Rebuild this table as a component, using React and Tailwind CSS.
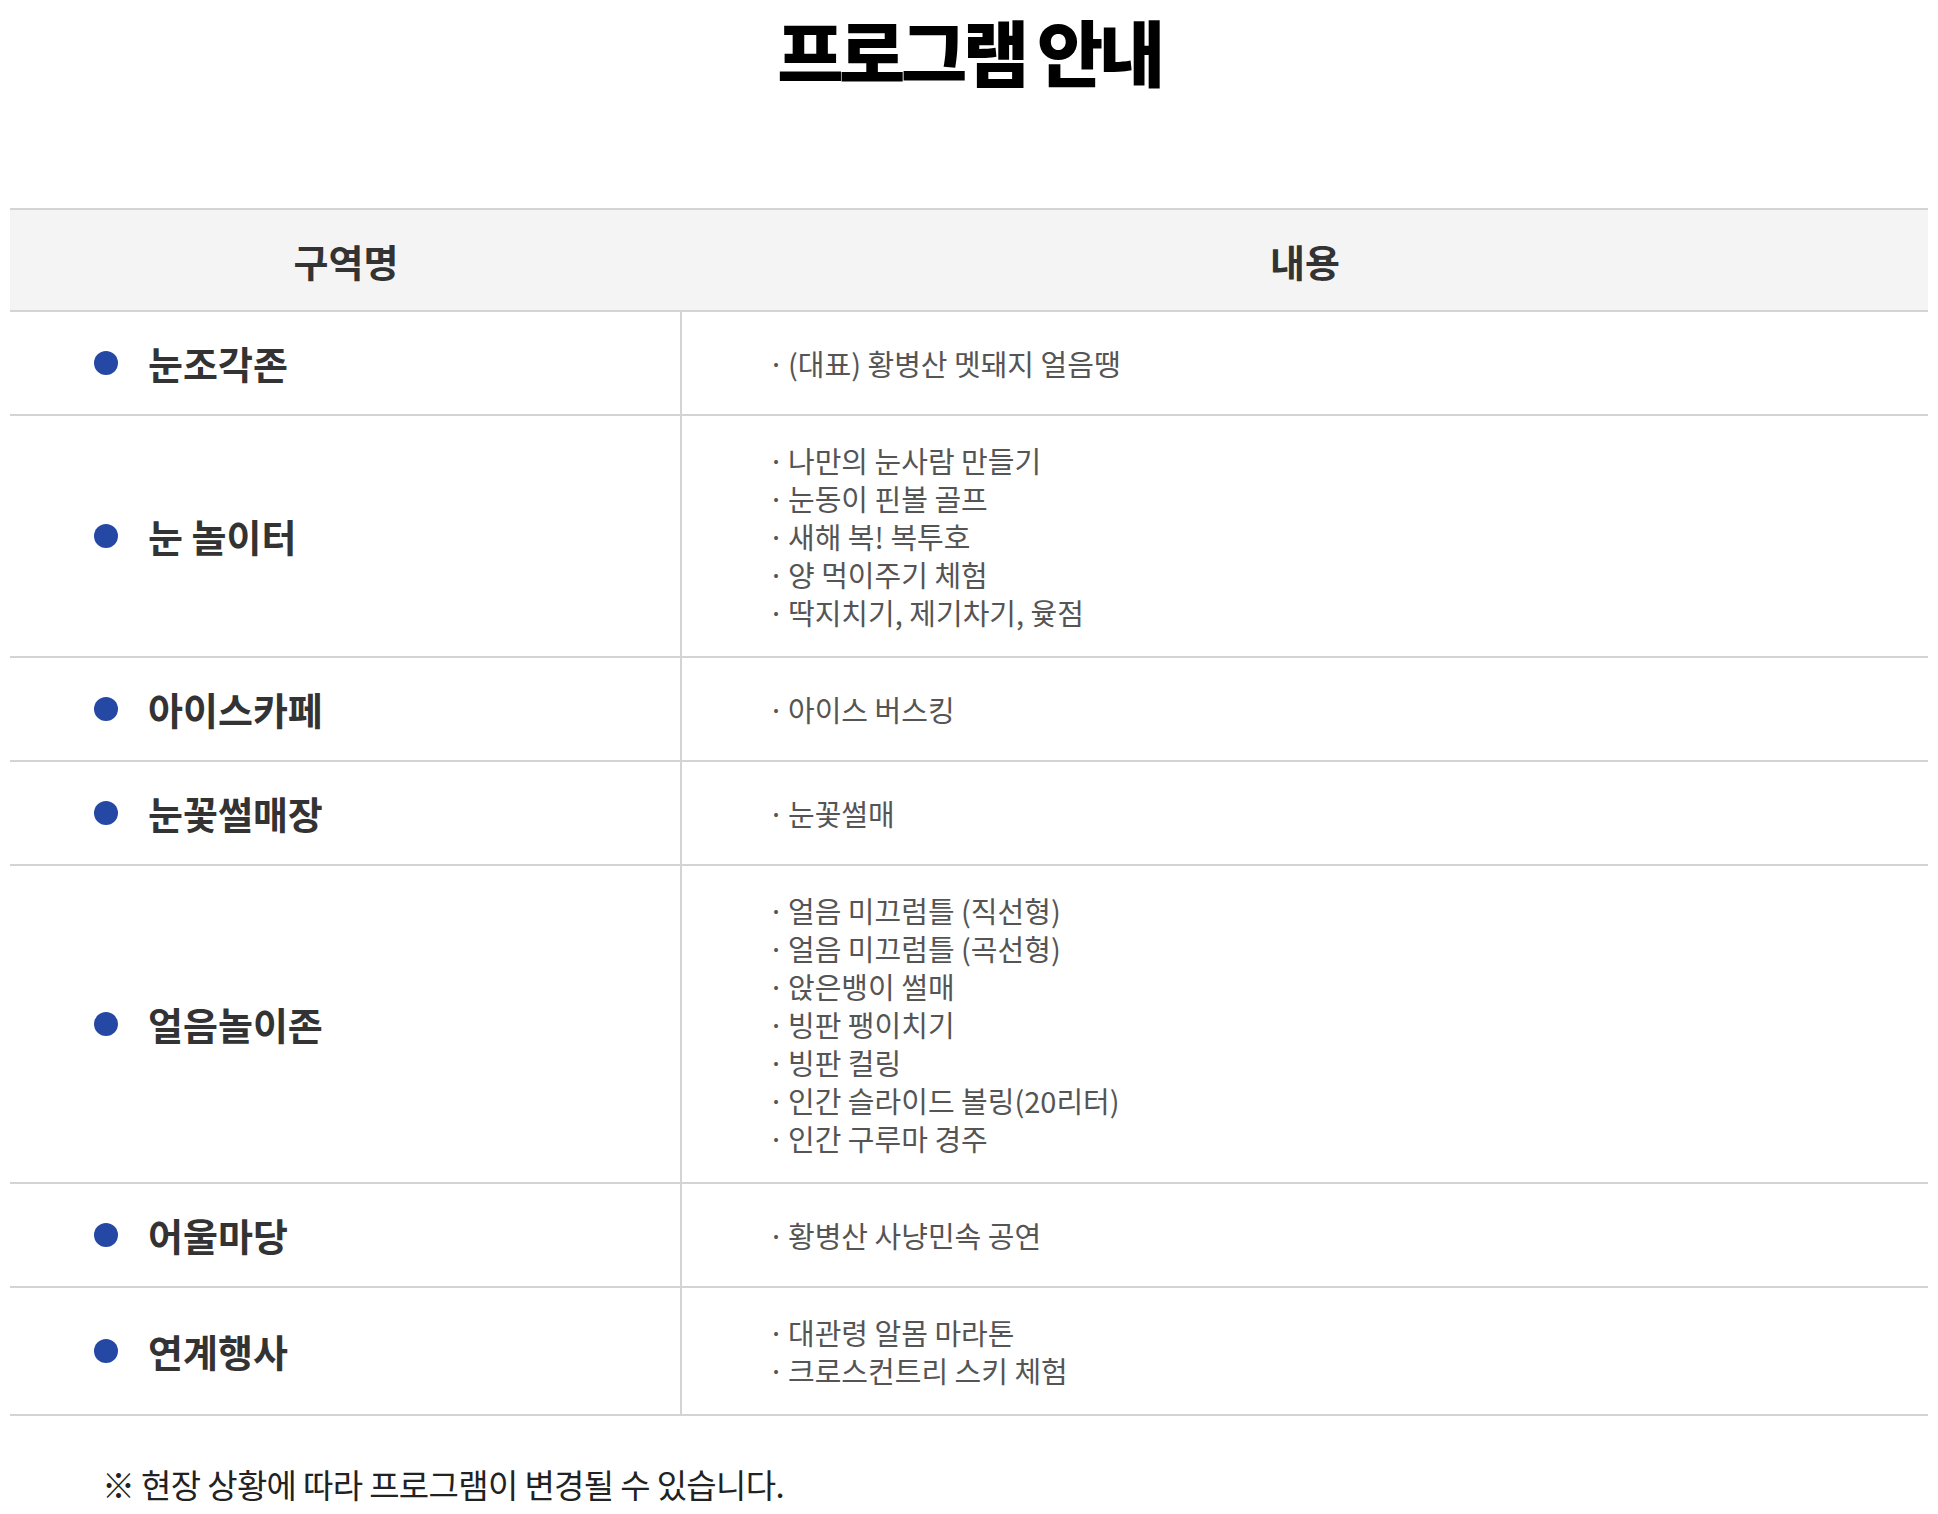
import React from "react";

const rows = [
  { name: "눈조각존", items: ["(대표) 황병산 멧돼지 얼음땡"] },
  {
    name: "눈 놀이터",
    items: [
      "나만의 눈사람 만들기",
      "눈동이 핀볼 골프",
      "새해 복! 복투호",
      "양 먹이주기 체험",
      "딱지치기, 제기차기, 윷점",
    ],
  },
  { name: "아이스카페", items: ["아이스 버스킹"] },
  { name: "눈꽃썰매장", items: ["눈꽃썰매"] },
  {
    name: "얼음놀이존",
    items: [
      "얼음 미끄럼틀 (직선형)",
      "얼음 미끄럼틀 (곡선형)",
      "앉은뱅이 썰매",
      "빙판 팽이치기",
      "빙판 컬링",
      "인간 슬라이드 볼링(20리터)",
      "인간 구루마 경주",
    ],
  },
  { name: "어울마당", items: ["황병산 사냥민속 공연"] },
  { name: "연계행사", items: ["대관령 알몸 마라톤", "크로스컨트리 스키 체험"] },
];

export default function App() {
  return (
    <div
      className="w-[1938px] bg-white px-[10px] pb-[10px]"
      style={{ fontFamily: '"Noto Sans CJK KR", "Noto Sans", sans-serif' }}
    >
      <h1 className="h-[208px] pt-[2px] text-center text-[72px] font-black leading-[96px] tracking-[-0.06em] text-black">
        프로그램 안내
      </h1>
      <div className="border-t-2 border-[#d4d4d4]">
        <div className="flex h-[102px] border-b-2 border-[#d4d4d4] bg-[#f4f4f4] text-[38px] font-bold text-[#333]">
          <div className="flex w-[672px] items-center justify-center">구역명</div>
          <div className="flex flex-1 items-center justify-center">내용</div>
        </div>
        {rows.map((r) => (
          <div key={r.name} className="flex min-h-[104px] border-b-2 border-[#d4d4d4]">
            <div className="flex w-[672px] items-center gap-[30px] border-r-2 border-[#d4d4d4] pl-[84px]">
              <span className="h-[24px] w-[24px] shrink-0 rounded-full bg-[#2548a4]" />
              <span className="text-[38px] font-bold leading-none text-[#333]">{r.name}</span>
            </div>
            <div className="flex flex-1 flex-col justify-center py-[25px] pl-[86px]">
              {r.items.map((t) => (
                <div key={t} className="flex text-[29px] leading-[38px] text-[#555]">
                  <span className="w-[20px] shrink-0">·</span>
                  <span>{t}</span>
                </div>
              ))}
            </div>
          </div>
        ))}
      </div>
      <p className="mt-[46px] pl-[92px] text-[33px] leading-[44px] tracking-[-0.02em] text-[#222]">
        ※ 현장 상황에 따라 프로그램이 변경될 수 있습니다.
      </p>
    </div>
  );
}
